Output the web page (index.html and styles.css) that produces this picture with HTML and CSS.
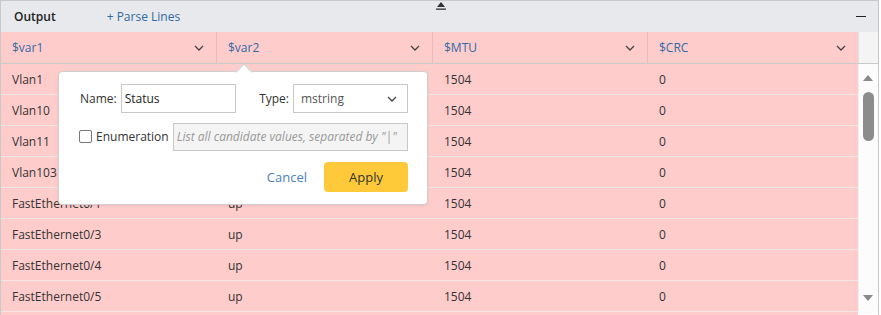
FILE: index.html
```html
<!DOCTYPE html>
<html lang="en">
<head>
  <meta charset="UTF-8" />
  <title>Output</title>
  <link rel="stylesheet" href="styles.css">
</head>
<body>
  <div class="panel">
    <!-- toolbar -->
    <div class="toolbar">
      <span class="tb-title">Output</span>
      <span class="tb-link">+ Parse Lines</span>
      <span class="tb-collapse">
        <svg width="12" height="8" viewBox="0 0 12 8"><polygon points="6,0 10,5 2,5" fill="#333"/><rect x="1" y="6.5" width="10" height="1.3" fill="#333"/></svg>
      </span>
      <span class="tb-min"></span>
    </div>

    <!-- header -->
    <div class="grid head">
      <div class="hcell">$var1<svg class="chev" width="10" height="6" viewBox="0 0 10 6"><polyline points="1,1 5,5 9,1" fill="none" stroke="#444" stroke-width="1.3"/></svg></div>
      <div class="hcell">$var2<svg class="chev" width="10" height="6" viewBox="0 0 10 6"><polyline points="1,1 5,5 9,1" fill="none" stroke="#444" stroke-width="1.3"/></svg></div>
      <div class="hcell">$MTU<svg class="chev" width="10" height="6" viewBox="0 0 10 6"><polyline points="1,1 5,5 9,1" fill="none" stroke="#444" stroke-width="1.3"/></svg></div>
      <div class="hcell">$CRC<svg class="chev" width="10" height="6" viewBox="0 0 10 6"><polyline points="1,1 5,5 9,1" fill="none" stroke="#444" stroke-width="1.3"/></svg></div>
      <div class="gutter"></div>
    </div>

    <div class="body">
      <div class="rows">
        <div class="grid row"><div>Vlan1</div><div>up</div><div>1504</div><div>0</div></div>
        <div class="grid row"><div>Vlan10</div><div>up</div><div>1504</div><div>0</div></div>
        <div class="grid row"><div>Vlan11</div><div>up</div><div>1504</div><div>0</div></div>
        <div class="grid row"><div>Vlan103</div><div>up</div><div>1504</div><div>0</div></div>
        <div class="grid row"><div>FastEthernet0/1</div><div>up</div><div>1504</div><div>0</div></div>
        <div class="grid row"><div>FastEthernet0/3</div><div>up</div><div>1504</div><div>0</div></div>
        <div class="grid row"><div>FastEthernet0/4</div><div>up</div><div>1504</div><div>0</div></div>
        <div class="grid row"><div>FastEthernet0/5</div><div>up</div><div>1504</div><div>0</div></div>
        <div class="grid row"></div>
      </div>
      <div class="scrollbar">
        <svg class="sb-up" width="10" height="6" viewBox="0 0 10 6"><polygon points="5,0 10,6 0,6" fill="#8a8a8a"/></svg>
        <div class="sb-thumb"></div>
        <svg class="sb-down" width="10" height="6" viewBox="0 0 10 6"><polygon points="0,0 10,0 5,6" fill="#8a8a8a"/></svg>
      </div>
    </div>

    <!-- column edit popover -->
    <div class="popover">
      <div class="pop-row">
        <label class="pop-field">Name:<input class="txt" type="text" value="Status"></label>
        <label class="pop-field">Type:
          <span class="select">mstring<svg width="10" height="6" viewBox="0 0 10 6"><polyline points="1,1 5,5 9,1" fill="none" stroke="#444" stroke-width="1.3"/></svg></span>
        </label>
      </div>
      <div class="pop-row enum">
        <span class="checkbox"></span>
        <span class="enum-label">Enumeration</span>
        <input class="txt enum-input" type="text" placeholder="List all candidate values, separated by &quot;|&quot;">
      </div>
      <div class="pop-row actions">
        <span class="cancel">Cancel</span>
        <span class="apply">Apply</span>
      </div>
    </div>
  </div>
</body>
</html>
```

FILE: styles.css
```css
* { box-sizing: border-box; margin: 0; padding: 0; }
body {
  background: #fff;
  font-family: "Open Sans", "Noto Sans", sans-serif;
  font-size: 12px;
  color: #333;
}
.panel {
  position: relative;
  width: 879px;
  height: 315px;
  border: 1px solid #c8c8c8;
  border-bottom: none;
  overflow: hidden;
}
.toolbar {
  height: 31px;
  background: #e8e9ec;
  display: flex;
  align-items: center;
  position: relative;
}
.tb-title { font-weight: 600; color: #222; margin-left: 13px; }
.tb-link { color: #2f6aa3; margin-left: 51px; }
.tb-collapse {
  position: absolute;
  left: 434px; top: 1px;
  line-height: 0;
}
.tb-min {
  margin-left: auto;
  margin-right: 12px;
  width: 10px;
  height: 1.5px;
  background: #222;
}
.grid {
  display: grid;
  grid-template-columns: 216px 216px 215px 210px;
}
.head {
  grid-template-columns: 216px 216px 215px 210px 20px;
  height: 32px;
  border-bottom: 1px solid #c9c9c9;
  background: #ffcccc;
}
.hcell {
  display: flex;
  align-items: center;
  justify-content: space-between;
  padding: 0 12px 0 11px;
  color: #2f6aa3;
  border-right: 1px solid #e6bcbc;
}
.hcell:nth-child(4) { border-right: none; }
.gutter { background: #f4f4f4; border-left: 1px solid #e0e0e0; }
.body { display: flex; }
.rows { width: 857px; }
.row {
  height: 31px;
  background: #ffcccc;
  border-bottom: 1px solid #f0e6e6;
  align-items: center;
}
.row div { padding-left: 11px; }
.scrollbar {
  width: 20px;
  background: #fcfcfc;
  border-left: 1px solid #f0f0f0;
  position: relative;
  height: 250px;
}
.sb-up { position: absolute; left: 4px; top: 11px; }
.sb-thumb {
  position: absolute;
  left: 4px; top: 28px;
  width: 11px; height: 49px;
  border-radius: 6px;
  background: #8c8c8c;
}
.sb-down { position: absolute; left: 4px; top: 231px; }

/* popover */
.popover {
  position: absolute;
  left: 57px; top: 70px;
  width: 370px;
  height: 134px;
  background: #fff;
  border: 1px solid #cfcfcf;
  border-radius: 4px;
  box-shadow: 0 1px 3px rgba(0,0,0,0.08);
  padding: 12px 19px 0 21px;
  display: flex;
  flex-direction: column;
  gap: 10px;
}
.popover::before {
  content: "";
  position: absolute;
  left: 179px; top: -6px;
  width: 11px; height: 11px;
  background: #fff;
  border-top: 1px solid #cfcfcf;
  border-left: 1px solid #cfcfcf;
  transform: rotate(45deg);
}
.pop-row { display: flex; align-items: center; }
.pop-row:first-child { justify-content: space-between; }
.pop-field { display: flex; align-items: center; gap: 4px; font-size: 12px; color: #333; }
.txt {
  font-family: inherit;
  font-size: 12px;
  color: #222;
  border: 1px solid #c8c8c8;
  height: 29px;
  padding: 0 3px;
  outline: none;
}
.pop-field .txt { width: 115px; }
.select {
  width: 115px;
  height: 29px;
  border: 1px solid #c8c8c8;
  display: flex;
  align-items: center;
  justify-content: space-between;
  padding: 0 10px 0 7px;
  color: #555;
}
.enum { height: 27px; margin-top: 0; }
.checkbox {
  width: 13px; height: 13px;
  border: 1px solid #777;
  border-radius: 2px;
  margin-right: 4px;
  margin-left: -1px;
}
.enum-label { margin-right: 4px; }
.enum-input {
  flex: 1;
  height: 28px;
  background: #f4f4f4;
  padding: 0 3px;
}
.enum-input::placeholder { color: #999; font-style: italic; }
.actions { justify-content: flex-end; gap: 17px; margin-top: 2px; }
.cancel { color: #4a80b8; font-size: 13px; }
.apply {
  width: 84px; height: 30px;
  background: #ffca3a;
  border-radius: 4px;
  display: flex;
  align-items: center;
  justify-content: center;
  font-size: 13px;
  color: #333;
}
```
